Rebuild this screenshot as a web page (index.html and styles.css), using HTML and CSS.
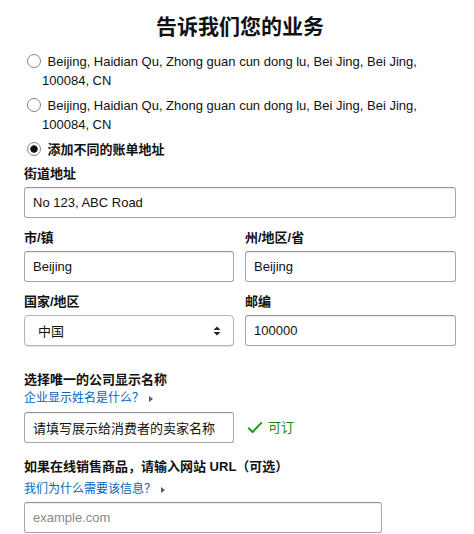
FILE: index.html
```html
<!DOCTYPE html>
<html lang="zh-CN">
<head>
<meta charset="utf-8">
<title>告诉我们您的业务</title>
<link rel="stylesheet" href="styles.css">
</head>
<body>
<div class="page">
  <h1 class="title">告诉我们您的业务</h1>

  <div class="radios">
    <label class="radio"><input type="radio" name="addr"> Beijing, Haidian Qu, Zhong guan cun dong lu, Bei Jing, Bei Jing, 100084, CN</label>
    <label class="radio"><input type="radio" name="addr"> Beijing, Haidian Qu, Zhong guan cun dong lu, Bei Jing, Bei Jing, 100084, CN</label>
    <label class="radio radio-strong"><input type="radio" name="addr" checked> 添加不同的账单地址</label>
  </div>

  <div class="field">
    <div class="label">街道地址</div>
    <input class="input" type="text" value="No 123, ABC Road">
  </div>

  <div class="row">
    <div class="field">
      <div class="label">市/镇</div>
      <input class="input" type="text" value="Beijing">
    </div>
    <div class="field">
      <div class="label">州/地区/省</div>
      <input class="input" type="text" value="Beijing">
    </div>
  </div>

  <div class="row">
    <div class="field">
      <div class="label">国家/地区</div>
      <div class="select">
        <span>中国</span>
        <svg class="select-arrows" width="8" height="10" viewBox="0 0 8 10"><path d="M4 0.5 L7.5 4 L0.5 4 Z M4 9.5 L7.5 6 L0.5 6 Z" fill="#222"/></svg>
      </div>
    </div>
    <div class="field">
      <div class="label">邮编</div>
      <input class="input" type="text" value="100000">
    </div>
  </div>

  <div class="section">
    <div class="label">选择唯一的公司显示名称</div>
    <a class="link" href="#">企业显示姓名是什么？<span class="caret"></span></a>
    <div class="name-row">
      <input class="input name-input" type="text" value="请填写展示给消费者的卖家名称">
      <span class="ok">
        <svg width="16" height="13" viewBox="0 0 16 13"><path d="M1.2 6.8 L5.6 11 L14.8 1.4" fill="none" stroke="#1f9a1f" stroke-width="2"/></svg>
        可订
      </span>
    </div>
  </div>

  <div class="section section-2">
    <div class="label">如果在线销售商品，请输入网站 URL（可选）</div>
    <a class="link link-2" href="#">我们为什么需要该信息？<span class="caret"></span></a>
    <input class="input url-input" type="text" placeholder="example.com">
  </div>
</div>
</body>
</html>
```

FILE: styles.css
```css
* { box-sizing: border-box; }

html, body {
  margin: 0;
  padding: 0;
  background: #fff;
}

body {
  font-family: "Liberation Sans", Arial, "Noto Sans CJK SC", sans-serif;
  font-size: 13px;
  line-height: 19px;
  color: #111;
  overflow: hidden;
}

.page {
  width: 432px;
  margin-left: 24px;
  padding-top: 13px;
}

.title {
  margin: 0;
  text-align: center;
  font-size: 21px;
  line-height: 28px;
  font-weight: 700;
  color: #111;
}

.radios {
  margin-top: 11px;
  display: flex;
  flex-direction: column;
  gap: 6px;
}

.radio {
  display: block;
  padding-left: 18px;
  font-size: 13px;
  line-height: 19px;
}

.radio-strong {
  font-weight: 700;
}

.radio input {
  -webkit-appearance: none;
  appearance: none;
  width: 14px;
  height: 14px;
  margin: 0 3px 0 -15px;
  vertical-align: -2px;
  border: 1px solid #858585;
  border-radius: 50%;
  background: #fff;
}

.radio input:checked {
  background: radial-gradient(circle, #111 0 3.4px, #fff 4px);
}

.field {
  display: flex;
  flex-direction: column;
}

.radios + .field {
  margin-top: 5px;
}

.label {
  font-weight: 700;
  line-height: 19px;
  margin-bottom: 4px;
  color: #111;
}

.input {
  display: block;
  width: 100%;
  height: 31px;
  padding: 0 8px;
  border: 1px solid #a6a6a6;
  border-top-color: #949494;
  border-radius: 3px;
  box-shadow: 0 1px 0 rgba(255,255,255,.5), 0 1px 0 rgba(0,0,0,.07) inset;
  font-family: "Liberation Sans", Arial, "Noto Sans CJK SC", sans-serif;
  font-size: 13px;
  color: #111;
  background: #fff;
  outline: none;
}

.input::placeholder {
  color: #8a8a8a;
}

.row {
  display: grid;
  grid-template-columns: 210px 211px;
  column-gap: 11px;
  margin-top: 10px;
}

.field + .row {
  margin-top: 10px;
}

.select {
  height: 31px;
  display: flex;
  align-items: center;
  justify-content: space-between;
  padding: 0 12px 0 13px;
  border: 1px solid #b4b4b4;
  border-radius: 4px;
  background: #fff;
  box-shadow: 0 1px 1px rgba(0,0,0,.12);
  font-family: "Noto Sans CJK SC", sans-serif;
  font-size: 13px;
}

.section {
  margin-top: 24px;
  display: flex;
  flex-direction: column;
  align-items: flex-start;
}

.section .label {
  margin-bottom: 0;
}

.section-2 {
  margin-top: 14px;
}

.link {
  color: #0066c0;
  text-decoration: none;
  font-size: 12px;
  line-height: 19px;
  display: inline-flex;
  align-items: center;
}

.link-2 {
  margin-top: 4px;
}

.caret {
  display: inline-block;
  width: 0;
  height: 0;
  margin-left: 5px;
  border-top: 3.5px solid transparent;
  border-bottom: 3.5px solid transparent;
  border-left: 4px solid #4e5f73;
}

.name-row {
  margin-top: 4px;
  display: flex;
  align-items: center;
  width: 100%;
}

.name-input {
  width: 210px;
}

.ok {
  margin-left: 13px;
  display: inline-flex;
  align-items: center;
  gap: 5px;
  color: #118a11;
}

.url-input {
  margin-top: 3px;
  width: 358px;
}
```
